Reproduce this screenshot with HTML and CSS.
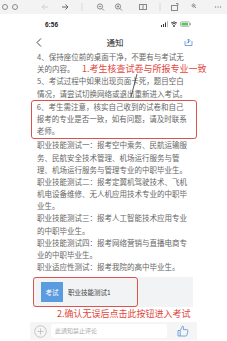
FILE: index.html
```html
<!DOCTYPE html>
<html>
<head>
<meta charset="utf-8">
<link rel="stylesheet" href="styles.css">
</head>
<body>
<div class="toolbar">
  <svg class="tb" width="227" height="14" viewBox="0 0 227 14">
    <g fill="none" stroke="#8a8a8a" stroke-width="1">
      <circle cx="5" cy="7" r="2.5"/>
      <circle cx="15" cy="7" r="2.5"/>
      <path d="M48 7h-6m2.5-2.5L42 7l2.5 2.5" stroke="#cfcfcf"/>
      <path d="M62 7h6m-2.5-2.5L68 7l-2.5 2.5" stroke="#666"/>
      <path d="M82 3v8" stroke="#d8d8d8"/>
      <circle cx="100" cy="6.5" r="2.6"/><path d="M102 8.5l2 2M98.8 6.5h2.4"/>
      <circle cx="118" cy="6.5" r="2.6"/><path d="M120 8.5l2 2M116.8 6.5h2.4M118 5.3v2.4"/>
      <rect x="139.5" y="4.5" width="7" height="5"/><path d="M143 4.5v5"/>
      <path d="M160 3v8" stroke="#d8d8d8"/>
      <rect x="171.5" y="5.5" width="6" height="5"/><path d="M176 3.5l2 0v2" />
      <path d="M193 5l3 3m-2.5-4a1.5 1.5 0 1 0 0.1 0z"/>
    </g>
    <g fill="#8a8a8a"><circle cx="215.5" cy="7" r="0.7"/><circle cx="218" cy="7" r="0.7"/><circle cx="220.5" cy="7" r="0.7"/></g>
  </svg>
</div>
<div class="phone">
  <div class="status">
    <span class="time">6:56</span>
    <svg width="32" height="6" viewBox="0 0 32 6">
      <g fill="#333"><rect x="0" y="4" width="1" height="2"/><rect x="2" y="3" width="1" height="3"/><rect x="4" y="1.5" width="1" height="4.5"/><rect x="6" y="0" width="1" height="6" fill="#bbb"/></g>
      <path d="M10 2a5 5 0 0 1 6 0M11 3.3a3 3 0 0 1 4 0" stroke="#333" stroke-width="0.9" fill="none"/><circle cx="13" cy="5" r="0.9" fill="#333"/>
      <rect x="19.5" y="0.8" width="9" height="4.6" rx="1" fill="none" stroke="#999" stroke-width="0.7"/>
      <rect x="20.5" y="1.7" width="6.5" height="2.8" fill="#5cc45c"/>
      <rect x="29" y="2.2" width="0.8" height="1.8" fill="#999"/>
    </svg>
  </div>
  <div class="nav">
    <svg width="6" height="9" viewBox="0 0 6 9"><path d="M5 0.5L1 4.5L5 8.5" fill="none" stroke="#333" stroke-width="0.9"/></svg>
    <span class="title">通知</span>
    <svg width="9" height="8" viewBox="0 0 9 8"><path d="M1 3v4.5h7V3M4.5 5.2V1M4.5 1L6 2.5M4.5 1L3 2.5" fill="none" stroke="#5a8fd6" stroke-width="0.8"/><path d="M2.5 5.5q1.5-2.5 4-2.5" fill="none" stroke="#5a8fd6" stroke-width="0.7"/></svg>
  </div>
  <div class="content">
    <div class="ln">4、保持座位前的桌面干净，不要有与考试无</div>
    <div class="ln">关的内容。</div>
    <div class="ln">5、考试过程中如果出现页面卡死，题目空白</div>
    <div class="ln">情况，请尝试切换网络或退出重新进入考试。</div>
    <div class="box">
      <div class="ln">6、考生需注意，核实自己收到的试卷和自己</div>
      <div class="ln">报考的专业是否一致，如有问题，请及时联系</div>
      <div class="ln">老师。</div>
    </div>
    <div class="ln">职业技能测试一：报考空中乘务、民航运输服</div>
    <div class="ln">务、民航安全技术管理、机场运行服务与管</div>
    <div class="ln">理、机场运行服务与管理专业的中职毕业生。</div>
    <div class="ln">职业技能测试二：报考定翼机驾驶技术、飞机</div>
    <div class="ln">机电设备维修、无人机应用技术专业的中职毕</div>
    <div class="ln">业生。</div>
    <div class="ln">职业技能测试三：报考人工智能技术应用专业</div>
    <div class="ln">的中职毕业生。</div>
    <div class="ln">职业技能测试四：报考网络营销与直播电商专</div>
    <div class="ln">业的中职毕业生。</div>
    <div class="ln">职业适应性测试：报考我院的高中毕业生。</div>
  </div>
  <div class="card">
    <div class="exam">
      <div class="badge">考试</div>
      <span class="exam-name">职业技能测试1</span>
    </div>
  </div>
  <div class="note2">2.确认无误后点击此按钮进入考试</div>
  <div class="bottom">
    <svg width="13" height="13" viewBox="0 0 13 13"><circle cx="6.5" cy="6.5" r="5.8" fill="none" stroke="#bbb" stroke-width="0.8"/><path d="M6.5 3.5v6M3.5 6.5h6" stroke="#bbb" stroke-width="0.8"/></svg>
    <div class="input">此通知禁止评论</div>
    <svg width="12" height="12" viewBox="0 0 12 12"><path d="M1 5.5h2.2v5.5H1zM3.2 5.5L5.5 1.2q1.3 0 1.1 1.6L6.3 4.6h3.6q1.2 0.2 1 1.4l-0.9 4q-0.3 1-1.3 1H3.2" fill="none" stroke="#5a8fd6" stroke-width="0.8" stroke-linejoin="round"/></svg>
  </div>
</div>
<div class="note1">1.考生核查试卷与所报专业一致</div>
<svg class="arrow" width="12" height="26" viewBox="0 0 12 26"><path d="M8 1L2 24" stroke="#333" stroke-width="0.8"/></svg>
</body>
</html>
```
FILE: styles.css
```css
html, body {
  margin: 0;
  padding: 0;
  background: #fff;
}
body {
  width: 227px;
  height: 341px;
  overflow: hidden;
  position: relative;
  font-family: "Noto Sans CJK SC", "Noto Sans", sans-serif;
}
.toolbar {
  height: 14px;
  background: #f3f3f3;
}
.tb { display: block; }
.phone {
  margin-left: 28px;
  width: 172px;
}
.status {
  height: 20px;
  display: flex;
  align-items: center;
  justify-content: space-between;
  padding: 0 7px 0 17px;
}
.time {
  font-family: "Liberation Sans", sans-serif;
  font-size: 6.5px;
  font-weight: bold;
  color: #222;
}
.nav {
  height: 16px;
  display: flex;
  align-items: center;
  justify-content: space-between;
  padding: 0 7px 0 8px;
}
.title {
  font-size: 8.5px;
  color: #222;
  margin-left: 4px;
}
.content {
  padding-top: 1px;
  color: #666;
  font-size: 7.5px;
}
.ln {
  height: 12.2px;
  line-height: 12.2px;
  white-space: nowrap;
  padding-left: 9px;
}
.box {
  margin: 0 3px 0 3px;
  border: 1.2px solid #d9534f;
  border-radius: 3px;
  box-sizing: border-box;
  padding: 0 0 1px 0;
}
.box .ln { padding-left: 4.8px; }
.card {
  margin: 4px 7px 0 5px;
  height: 30px;
  background: #f2f3f5;
  display: flex;
}
.exam {
  width: 105px;
  border: 1.2px solid #d9534f;
  border-radius: 3px;
  box-sizing: border-box;
  display: flex;
  align-items: center;
  padding-left: 7px;
}
.badge {
  width: 22px;
  height: 20px;
  background: #5b9be0;
  color: #fff;
  font-size: 6.5px;
  display: flex;
  align-items: center;
  justify-content: center;
}
.exam-name {
  font-size: 6.5px;
  color: #444;
  margin-left: 5px;
}
.note2 {
  color: #e0473d;
  font-size: 9px;
  height: 14px;
  line-height: 14px;
  padding-left: 29px;
  white-space: nowrap;
}
.bottom {
  margin: 1px 3px 0 2px;
  height: 18px;
  background: #f5f5f5;
  display: flex;
  align-items: center;
  padding: 0 8px 0 4px;
  gap: 4px;
}
.input {
  flex: 1;
  height: 14px;
  background: #fff;
  border-radius: 2px;
  font-size: 6px;
  color: #aaa;
  line-height: 14px;
  padding-left: 4px;
  margin-right: 6px;
}
.note1 {
  position: absolute;
  left: 82px;
  top: 62px;
  color: #e0473d;
  font-size: 9px;
  line-height: 14px;
  white-space: nowrap;
}
.arrow {
  position: absolute;
  left: 129px;
  top: 73px;
}
```
